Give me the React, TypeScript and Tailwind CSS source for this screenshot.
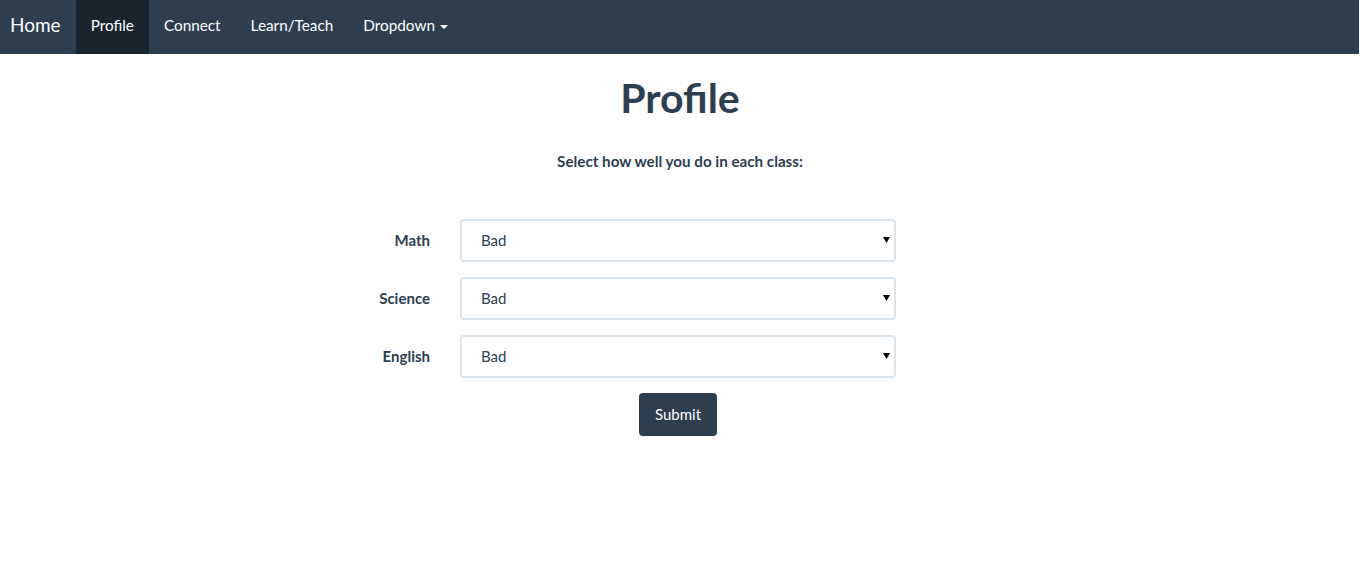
import { useState } from "react";

const subjects = ["Math", "Science", "English"];

function NavLink({ label, active }: { label: string; active?: boolean }) {
  return (
    <a
      href="#"
      className={
        "flex h-full items-center px-[15px] pb-[3px] text-[15.3px] text-white " +
        (active ? "bg-[#1a242f]" : "hover:text-[#18bc9c]")
      }
    >
      {label}
    </a>
  );
}

function GradeSelect({ label }: { label: string }) {
  const [value, setValue] = useState("Bad");
  return (
    <div className="flex items-center">
      <label className="w-[445px] pr-[15px] text-right text-[15px] font-bold text-[#2c3e50]">
        {label}
      </label>
      <div className="relative ml-[15px] w-[436px]">
        <select
          value={value}
          onChange={(e) => setValue(e.target.value)}
          className="h-[43px] w-full appearance-none rounded-[4px] border-2 border-[#dce4ec] bg-white pl-[19px] text-[15px] text-[#2c3e50] outline-none"
        >
          <option>Bad</option>
          <option>Okay</option>
          <option>Good</option>
        </select>
        <svg
          className="pointer-events-none absolute right-[6px] top-[18px]"
          width="7"
          height="6"
          viewBox="0 0 7 6"
        >
          <path d="M0 0h7L3.5 6z" fill="#000" />
        </svg>
      </div>
    </div>
  );
}

export default function App() {
  return (
    <div className="min-h-[564px] bg-white font-['Lato','Open_Sans',sans-serif] text-[#2c3e50]">
      <nav className="flex h-[54px] w-[1359px] items-center bg-[#2c3e50]">
        <a href="#" className="flex h-full items-center pb-[3px] pl-[10px] pr-[15px] text-[19px] text-white">
          Home
        </a>
        <NavLink label="Profile" active />
        <NavLink label="Connect" />
        <NavLink label="Learn/Teach" />
        <a href="#" className="flex h-full items-center px-[15px] pb-[3px] text-[15.3px] text-white">
          Dropdown
          <span className="ml-[5px] mt-[2px] inline-block border-x-[4px] border-t-[4px] border-x-transparent border-t-white" />
        </a>
      </nav>

      <div className="flex flex-col">
        <h1 className="mt-[19px] text-center text-[41px] font-bold leading-[50px]">Profile</h1>
        <p className="mt-[28px] text-center text-[15.2px] font-bold leading-[20px]">
          Select how well you do in each class:
        </p>

        <form className="mt-[48px] flex flex-col gap-[15px]" onSubmit={(e) => e.preventDefault()}>
          {subjects.map((s) => (
            <GradeSelect key={s} label={s} />
          ))}
          <div className="flex justify-center">
            <button
              type="submit"
              className="ml-[-4px] h-[43px] w-[78px] rounded-[4px] bg-[#2c3e50] text-[15px] text-white"
            >
              Submit
            </button>
          </div>
        </form>
      </div>
    </div>
  );
}
